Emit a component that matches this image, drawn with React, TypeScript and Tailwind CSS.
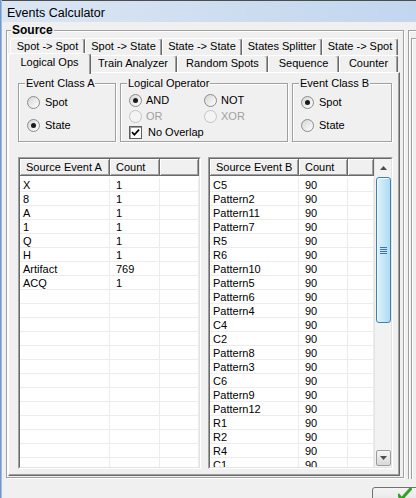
type Row = [string, string];
type TabDef = { label: string; w: string; selected?: boolean };

const ROWS_A: Row[] = [
  ["X", "1"],
  ["8", "1"],
  ["A", "1"],
  ["1", "1"],
  ["Q", "1"],
  ["H", "1"],
  ["Artifact", "769"],
  ["ACQ", "1"],
];

const ROWS_B: Row[] = [
  "C5", "Pattern2", "Pattern11", "Pattern7", "R5", "R6", "Pattern10", "Pattern5", "Pattern6", "Pattern4", "C4",
  "C2", "Pattern8", "Pattern3", "C6", "Pattern9", "Pattern12", "R1", "R2", "R4", "C1",
].map((n) => [n, "90"] as Row);

const TABS_BACK: TabDef[] = [
  { label: "Spot -> Spot", w: "w-[75px]" },
  { label: "Spot -> State", w: "w-[77px]" },
  { label: "State -> State", w: "w-[80px]" },
  { label: "States Splitter", w: "w-[80px]" },
  { label: "State -> Spot", w: "w-[76px]" },
];

const TABS_FRONT: TabDef[] = [
  { label: "Logical Ops", w: "w-[83px]", selected: true },
  { label: "Train Analyzer", w: "w-[88px]" },
  { label: "Random Spots", w: "w-[91px]" },
  { label: "Sequence", w: "w-[71px]" },
  { label: "Counter", w: "w-[59px]" },
];

function Radio({ checked = false, disabled = false }: { checked?: boolean; disabled?: boolean }) {
  return (
    <span
      className={`flex h-[13px] w-[13px] flex-none items-center justify-center rounded-full border ${
        disabled ? "border-[#c4c4c4] bg-[#f4f4f4]" : "border-[#8b8b8b] bg-linear-to-br from-[#d6d6d6] to-white"
      }`}
    >
      {checked && <span className="h-[5px] w-[5px] rounded-full bg-[#1a1a1a]" />}
    </span>
  );
}

function Check() {
  return (
    <span className="flex h-[13px] w-[13px] flex-none items-center justify-center border border-[#5f5f5f] bg-white shadow-[inset_1px_1px_0_#a0a0a0]">
      <svg viewBox="0 0 9 9" width="9" height="9">
        <path d="M1 4.2 L3.4 6.8 L8 1.6" stroke="#000" strokeWidth="1.7" fill="none" />
      </svg>
    </span>
  );
}

function Group({ title, className, children }: { title: string; className: string; children: React.ReactNode }) {
  return (
    <fieldset className={`flex-none border border-[#a0a0a0] shadow-[inset_1px_1px_0_#fff,1px_1px_0_#fff] ${className}`}>
      <legend className="ml-[6px] bg-[#f0f0f0] px-[1px] leading-[13px]">{title}</legend>
      {children}
    </fieldset>
  );
}

function Tab({ label, w, selected, back }: TabDef & { back?: boolean }) {
  return (
    <div
      className={`flex flex-none items-center justify-center rounded-t-[3px] border-x border-t border-t-white border-l-white border-r-[#696969] bg-[#f0f0f0] shadow-[inset_-1px_0_0_#a0a0a0] ${w} ${
        selected ? "relative z-10 -mx-[2px] -mb-[2px] h-[21px] pb-[3px]" : back ? "h-[17px] pb-[2px]" : "h-[17px] pb-[1px]"
      }`}
    >
      {label}
    </div>
  );
}

const HDR =
  "flex h-[17px] flex-none items-center border-r border-b border-[#696969] bg-[#f0f0f0] pl-[6px] shadow-[inset_1px_1px_0_#fff,inset_-1px_-1px_0_#a0a0a0]";

function ListTable({ head, cols, rows, count }: { head: string[]; cols: string[]; rows: Row[]; count: number }) {
  return (
    <div className="flex flex-col">
      <div className="flex">
        <div className={`${HDR} ${cols[0]}`}>{head[0]}</div>
        <div className={`${HDR} ${cols[1]}`}>{head[1]}</div>
        <div className={`${HDR} ${cols[2]}`} />
      </div>
      <div className="flex flex-col pt-[2px]">
        {Array.from({ length: count }, (_, i) => {
          const r = rows[i];
          return (
            <div key={i} className="flex h-[14px] flex-none border-b border-[#ececec] leading-[14px]">
              <div className={`${cols[0]} border-r border-[#ececec] pl-[3px]`}>{r?.[0]}</div>
              <div className={`${cols[1]} border-r border-[#ececec] pl-[6px]`}>{r?.[1]}</div>
              <div className={`${cols[2]} border-r border-[#ececec]`} />
            </div>
          );
        })}
      </div>
    </div>
  );
}

function ListFrame({ w, children }: { w: string; children: React.ReactNode }) {
  return (
    <div className={`h-[312px] flex-none border border-t-[#a0a0a0] border-l-[#a0a0a0] border-r-white border-b-white ${w}`}>
      <div className="flex h-full overflow-hidden border border-t-[#696969] border-l-[#696969] border-r-[#e3e3e3] border-b-[#e3e3e3] bg-white">
        {children}
      </div>
    </div>
  );
}

function ScrollBar() {
  return (
    <div className="flex w-[17px] flex-none flex-col border-l border-[#e4e4e4] bg-[#f2f2f2]">
      <div className="flex h-[17px] flex-none items-center justify-center">
        <svg width="7" height="4" viewBox="0 0 7 4">
          <path d="M0 4 L3.5 0 L7 4 Z" fill="#4d4d4d" />
        </svg>
      </div>
      <div className="mt-[1px] ml-[1px] flex h-[146px] w-[15px] flex-none items-center justify-center rounded-[3px] border border-[#3c7fb1] bg-linear-to-r from-[#dff2fc] to-[#addbf4] shadow-[inset_1px_1px_0_#f3fbff]">
        <div className="flex flex-col gap-[1px]">
          <span className="h-px w-[7px] bg-[#3f77a6]" />
          <span className="h-px w-[7px] bg-[#3f77a6]" />
          <span className="h-px w-[7px] bg-[#3f77a6]" />
          <span className="h-px w-[7px] bg-[#3f77a6]" />
        </div>
      </div>
      <div className="mt-auto mb-[1px] ml-[1px] flex h-[16px] w-[15px] flex-none items-center justify-center rounded-[2px] border border-[#9c9c9c] bg-linear-to-b from-[#f6f6f6] to-[#d8d8d8]">
        <svg width="7" height="4" viewBox="0 0 7 4">
          <path d="M0 0 L3.5 4 L7 0 Z" fill="#4d4d4d" />
        </svg>
      </div>
    </div>
  );
}

export default function App() {
  return (
    <div className="flex h-[498px] w-[416px] overflow-hidden bg-[#f0f0f0] font-['Liberation_Sans',Arial,sans-serif] text-[11px] text-black">
      <div className="w-[2px] flex-none bg-linear-to-r from-[#5f88bd] to-[#b3cdee]" />

      <div className="flex w-[414px] flex-none flex-col">
        {/* title bar */}
        <div className="flex h-[22px] flex-none items-center border-t border-[#4d4d4d] bg-linear-to-r from-[#dbe6f3] to-[#c2d6ee] pl-[5px] pt-[3px] text-[12.5px]">
          Events Calculator
        </div>

        <div className="flex items-start">
          {/* Source group */}
          <fieldset className="mt-[1px] ml-[4px] w-[398px] flex-none border border-[#a0a0a0] pb-[1px] shadow-[inset_1px_1px_0_#fff,1px_1px_0_#fff]">
            <legend className="ml-[4px] bg-[#f0f0f0] px-[1px] text-[12px] leading-[14px] font-bold">Source</legend>

            <div className="mt-[1px] ml-[1px] w-[392px]">
              <div className="flex h-[17px] pl-[2px]">
                {TABS_BACK.map((t) => (
                  <Tab key={t.label} {...t} back />
                ))}
              </div>
              <div className="flex h-[17px] items-end pl-[2px]">
                {TABS_FRONT.map((t) => (
                  <Tab key={t.label} {...t} />
                ))}
              </div>

              {/* tab page */}
              <div className="flex h-[404px] w-[392px] flex-col border border-t-white border-l-white border-r-[#696969] border-b-[#696969] bg-[#f0f0f0] pt-[4px] pl-[9px] shadow-[inset_-1px_-1px_0_#a0a0a0]">
                <div className="flex gap-[4px]">
                  <Group title="Event Class A" className="h-[65px] w-[98px]">
                    <div className="flex flex-col gap-[7px] pt-[4px] pl-[8px]">
                      <label className="flex h-[16px] items-center gap-[5px]">
                        <Radio />
                        Spot
                      </label>
                      <label className="flex h-[16px] items-center gap-[5px]">
                        <Radio checked />
                        State
                      </label>
                    </div>
                  </Group>

                  <Group title="Logical Operator" className="h-[65px] w-[168px]">
                    <div className="grid grid-cols-[75px_1fr] pt-[2px] pl-[8px]">
                      <label className="flex h-[16px] items-center gap-[4px]">
                        <Radio checked />
                        AND
                      </label>
                      <label className="flex h-[16px] items-center gap-[4px]">
                        <Radio />
                        NOT
                      </label>
                      <label className="flex h-[16px] items-center gap-[4px] text-[#a0a0a0]">
                        <Radio disabled />
                        OR
                      </label>
                      <label className="flex h-[16px] items-center gap-[4px] text-[#a0a0a0]">
                        <Radio disabled />
                        XOR
                      </label>
                      <label className="col-span-2 flex h-[16px] items-center gap-[6px]">
                        <Check />
                        No Overlap
                      </label>
                    </div>
                  </Group>

                  <Group title="Event Class B" className="h-[65px] w-[100px]">
                    <div className="flex flex-col gap-[7px] pt-[4px] pl-[8px]">
                      <label className="flex h-[16px] items-center gap-[5px]">
                        <Radio checked />
                        Spot
                      </label>
                      <label className="flex h-[16px] items-center gap-[5px]">
                        <Radio />
                        State
                      </label>
                    </div>
                  </Group>
                </div>

                <div className="mt-[15px] flex gap-[7px]">
                  <ListFrame w="w-[183px]">
                    <ListTable
                      head={["Source Event A", "Count"]}
                      cols={["w-[90px]", "w-[50px]", "w-[39px]"]}
                      rows={ROWS_A}
                      count={22}
                    />
                  </ListFrame>
                  <ListFrame w="w-[185px]">
                    <ListTable
                      head={["Source Event B", "Count"]}
                      cols={["w-[89px]", "w-[49px]", "w-[26px]"]}
                      rows={ROWS_B}
                      count={22}
                    />
                    <ScrollBar />
                  </ListFrame>
                </div>
              </div>
            </div>
          </fieldset>

          {/* next group, clipped by the window edge */}
          <div className="mt-[8px] ml-[4px] h-[449px] w-[20px] flex-none border-t border-l border-[#a0a0a0] pt-[7px] pl-[2px] shadow-[inset_1px_1px_0_#fff]">
            <div className="h-full w-full border-t border-l border-[#a0a0a0] shadow-[inset_1px_1px_0_#fff]" />
          </div>
        </div>

        {/* bottom button, clipped */}
        <div className="mt-[8px] flex">
          <div className="ml-[370px] flex h-[26px] w-[60px] flex-none rounded-[3px] border border-[#707070] bg-linear-to-b from-[#f4f4f4] to-[#dcdcdc] pt-[0px] pl-[25px]">
            <svg width="14" height="14" viewBox="0 0 14 14">
              <path d="M0.5 7 L3.5 11 L12.5 1" stroke="#34a02a" strokeWidth="3" fill="none" strokeLinecap="round" />
            </svg>
          </div>
        </div>
      </div>
    </div>
  );
}
